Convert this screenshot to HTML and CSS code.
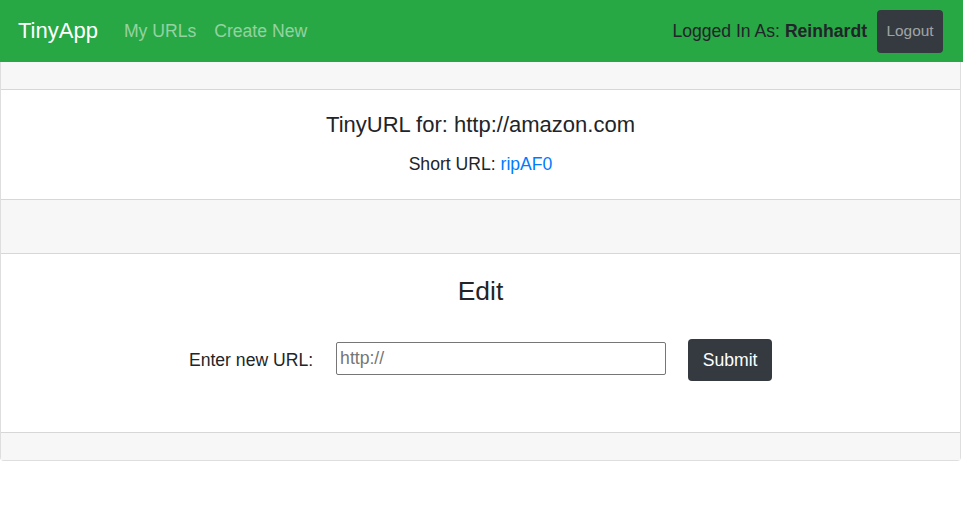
FILE: index.html
```html
<!DOCTYPE html>
<html>
<head>
<meta charset="utf-8">
<title>TinyApp</title>
<link rel="stylesheet" href="styles.css">
</head>
<body>
<nav class="navbar">
  <a class="brand" href="#">TinyApp</a>
  <div class="nav-links">
    <a class="nav-link" href="#">My URLs</a>
    <a class="nav-link" href="#">Create New</a>
  </div>
  <div class="nav-user">
    <span class="user-text">Logged In As: <b>Reinhardt</b></span>
    <button class="logout-btn">Logout</button>
  </div>
</nav>
<main class="card">
  <div class="card-header"></div>
  <section class="card-body info">
    <h5 class="card-title">TinyURL for: http://amazon.com</h5>
    <p class="short">Short URL: <a href="#">ripAF0</a></p>
  </section>
  <div class="card-divider"></div>
  <section class="card-body edit">
    <h3 class="edit-title">Edit</h3>
    <form class="edit-form">
      <label class="edit-label" for="url">Enter new URL:</label>
      <input id="url" class="edit-input" type="text" placeholder="http://">
      <button class="submit-btn" type="button">Submit</button>
    </form>
  </section>
  <div class="card-footer"></div>
</main>
</body>
</html>
```
FILE: styles.css
```css
* { box-sizing: border-box; }
html, body { margin: 0; padding: 0; }
body {
  font-family: "Liberation Sans", Arial, sans-serif;
  font-size: 17.6px;
  color: #212529;
  background: #fff;
  width: 963px;
}
.navbar {
  height: 62px;
  background: #28a745;
  display: flex;
  align-items: center;
  padding: 0 20px 0 18px;
}
.brand {
  color: #fff;
  font-size: 22px;
  text-decoration: none;
  margin-right: 26px;
}
.nav-links { display: flex; gap: 18px; }
.nav-link {
  color: rgba(255,255,255,.5);
  text-decoration: none;
  font-size: 17.6px;
}
.nav-user {
  margin-left: auto;
  display: flex;
  align-items: center;
  gap: 10px;
}
.user-text { color: #212529; font-size: 17.6px; }
.user-text b { font-weight: bold; }
.logout-btn {
  width: 66px;
  height: 43px;
  background: #343a40;
  color: rgba(255,255,255,.55);
  border: 0;
  border-radius: 4px;
  font-family: "Liberation Sans", Arial, sans-serif;
  font-size: 15.4px;
  padding: 0;
}
.card {
  width: 961px;
  border: 1px solid rgba(0,0,0,.13);
  border-top: 0;
  border-radius: 0 0 4px 4px;
  display: flex;
  flex-direction: column;
}
.card-header {
  height: 28px;
  background: #f7f7f7;
  border-bottom: 1px solid rgba(0,0,0,.13);
}
.card-body { text-align: center; }
.info { padding: 22px 22px 0; height: 109px; }
.card-title {
  margin: 0;
  font-size: 22px;
  font-weight: normal;
  line-height: 26px;
}
.short { margin: 13px 0 0; line-height: 26px; }
.short a { color: #007bff; text-decoration: none; }
.card-divider {
  height: 55px;
  background: #f7f7f7;
  border-top: 1px solid rgba(0,0,0,.13);
  border-bottom: 1px solid rgba(0,0,0,.13);
}
.edit { padding: 22px 22px 0; height: 178px; }
.edit-title {
  margin: 0;
  font-size: 26.4px;
  font-weight: normal;
  line-height: 31px;
}
.edit-form {
  margin-top: 32px;
  display: flex;
  justify-content: center;
  align-items: center;
}
.edit-label { margin-right: 23px; }
.edit-input {
  width: 330px;
  height: 33px;
  border: 1px solid #767676;
  border-radius: 2px;
  padding: 1px 3px;
  font-family: "Liberation Sans", Arial, sans-serif;
  font-size: 17.6px;
  color: #212529;
  margin-right: 22px;
  margin-bottom: 3px;
}
.edit-input::placeholder { color: #757575; }
.submit-btn {
  width: 84px;
  height: 42px;
  background: #343a40;
  color: #fff;
  border: 0;
  border-radius: 4px;
  font-family: "Liberation Sans", Arial, sans-serif;
  font-size: 17.6px;
  padding: 0;
}
.card-footer {
  height: 28px;
  background: #f7f7f7;
  border-top: 1px solid rgba(0,0,0,.13);
}
```
